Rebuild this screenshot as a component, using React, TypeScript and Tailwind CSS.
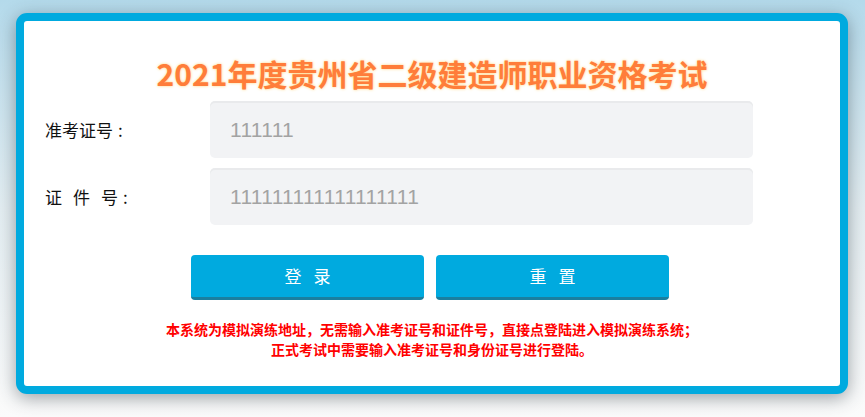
import React from "react";

const cjk = "font-['Noto_Sans_CJK_SC',sans-serif]";

function Field({ label, value }: { label: React.ReactNode; value: string }) {
  return (
    <div className="flex items-center">
      <div className="w-[186px] pl-[21px] text-[17px] text-[#111]">{label}</div>
      <div className="h-[57px] w-[543px] rounded-[5px] bg-[#f2f3f5] shadow-[inset_0_2px_0_#e9eaec] flex items-center pl-[20px]">
        <span className="font-['Liberation_Sans',sans-serif] text-[21px] tracking-[0.3px] text-[#a3a3a3]">{value}</span>
      </div>
    </div>
  );
}

export default function App() {
  return (
    <div className={`h-[417px] w-full overflow-hidden bg-gradient-to-b from-[#b4daeb] via-[#e4eef2] to-[#fbfbfb] pt-[13px] pl-[16px] ${cjk}`}>
      <div className="w-[832px] h-[381px] rounded-[11px] border-8 border-[#00aadf] bg-white shadow-[0_4px_18px_rgba(40,50,60,0.45)]">
        {/* title */}
        <h1 className="pt-[34px] text-center text-[30px] leading-[36px] font-bold text-[#ff7d3a] [text-shadow:0_0_3px_#ffd27a]">
          2021年度贵州省二级建造师职业资格考试
        </h1>

        <div className="mt-[10px] flex flex-col gap-[10px]">
          <Field
            label={
              <>
                准考证号<span className="ml-[5px]">:</span>
              </>
            }
            value="111111"
          />
          <Field
            label={
              <>
                证<span className="ml-[11px]">件</span>
                <span className="ml-[11px]">号</span>
                <span className="ml-[5px]">:</span>
              </>
            }
            value="111111111111111111"
          />
        </div>

        <div className="mt-[30px] ml-[167px] flex gap-[12px]">
          <button className="h-[45px] w-[233px] rounded-[4px] bg-[#00aadf] border-b-[3px] border-[#1a7f9f] text-white text-[17px] tracking-[12px] pl-[12px]">
            登录
          </button>
          <button className="h-[45px] w-[233px] rounded-[4px] bg-[#00aadf] border-b-[3px] border-[#1a7f9f] text-white text-[17px] tracking-[12px] pl-[12px]">
            重置
          </button>
        </div>

        <div className="mt-[19px] text-center text-[14px] leading-[20px] font-bold text-[#ff0000]">
          <p>本系统为模拟演练地址，无需输入准考证号和证件号，直接点登陆进入模拟演练系统；</p>
          <p>正式考试中需要输入准考证号和身份证号进行登陆。</p>
        </div>
      </div>
    </div>
  );
}
